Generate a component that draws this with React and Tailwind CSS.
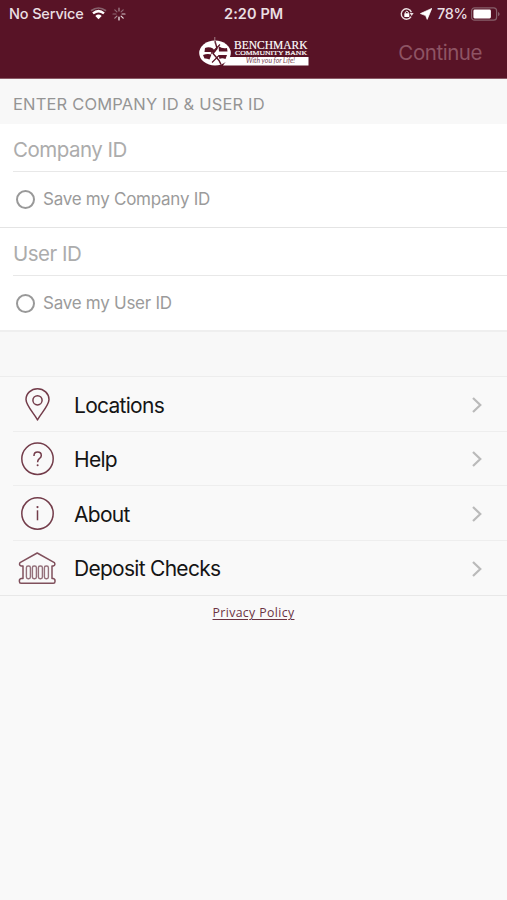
import React from "react";

function StatusBar() {
  return (
    <div className="flex h-[27px] items-center pl-[9px] pr-[5px] text-[14.5px] font-medium text-[#eadfe2]">
      <div className="flex w-[215px] shrink-0 items-center">
        <span className="w-[81px] whitespace-nowrap tracking-[-0.15px]">No Service</span>
        <svg width="17" height="13" viewBox="0 0 17 13" fill="none" className="shrink-0">
          <path d="M1 3.8Q8.5-1.8 16 3.8" stroke="#86606b" strokeWidth="1.7" />
          <path d="M3 6.4Q8.5 1.9 14 6.4" stroke="#fff" strokeWidth="2.5" />
          <path d="M5.3 8.9Q8.5 6.3 11.7 8.9L8.5 12.2Z" fill="#fff" />
        </svg>
        <svg width="14" height="14" viewBox="-7 -7 14 14" strokeWidth="1.2" strokeLinecap="round" className="ml-[5px]">
          <path d="M0-3V-6" stroke="#a88b93" />
          <path d="M2.1-2.1L4.2-4.2" stroke="#8f6a75" />
          <path d="M3 0H6" stroke="#d5c5ca" />
          <path d="M2.1 2.1L4.2 4.2" stroke="#e5d9dc" />
          <path d="M0 3V6" stroke="#fff" />
          <path d="M-2.1 2.1L-4.2 4.2" stroke="#a88b93" />
          <path d="M-3 0H-6" stroke="#8f6a75" />
          <path d="M-2.1-2.1L-4.2-4.2" stroke="#8f6a75" />
        </svg>
      </div>
      <span className="w-[176px] shrink-0 whitespace-nowrap text-[14.5px] font-semibold tracking-[0.1px]">2:20 PM</span>
      <svg width="14" height="14" viewBox="0 0 14 14" fill="none" className="shrink-0">
        <path d="M11 9.6A5.2 5.2 0 1 1 11.4 5.3" stroke="#eadfe2" strokeWidth="1.4" />
        <path d="M9.6 6H13.6L11.7 9Z" fill="#eadfe2" />
        <rect x="4.3" y="6.3" width="5" height="3.7" rx=".5" fill="#fff" />
        <path d="M5.3 6.5V5.3Q6.8 3 8.3 5.3V6.5" stroke="#fff" />
      </svg>
      <svg width="12" height="12" viewBox="0 0 12 12" className="ml-[6px] shrink-0">
        <path d="M11.8 .4L7.2 11.4L5.6 7.6L.4 5.6Z" fill="#fff" stroke="#fff" strokeWidth=".7" strokeLinejoin="round" />
      </svg>
      <span className="ml-[5px] w-[34px] shrink-0 whitespace-nowrap tracking-[-0.4px]">78%</span>
      <svg width="31" height="14" viewBox="0 0 31 14" fill="none" className="shrink-0">
        <rect x=".6" y=".8" width="25" height="12.4" rx="3" stroke="#86606b" strokeWidth="1.2" />
        <rect x="2.4" y="2.6" width="17.5" height="8.8" rx="1.3" fill="#fff" />
        <path d="M27 4.7Q30.4 7 27 9.3Z" fill="#86606b" />
      </svg>
    </div>
  );
}

function Logo() {
  return (
    <svg width="112" height="32" viewBox="0 0 112 32" className="shrink-0">
      <ellipse cx="16" cy="16" rx="15.8" ry="12.5" fill="#fff" />
      <path d="M30 20H109.5V28.5H24Z" fill="#fff" />
      <path d="M6 11Q10 9.5 14 11.5L16.5 15H5.5Z M19.5 9Q23 12 28 11L28.5 14.5H20Z M4 18Q8 16.5 12.5 17.5L10.5 22.5Q7 21 5.5 21.5Z M19.5 18H28L26.5 22Q23 20.5 20.5 22Z" fill="#581326" />
      <path d="M16 4L18 11.5L14 16.5L20 23.5L22 27.5" fill="none" stroke="#581326" strokeWidth="1.4" />
      <path d="M21 7.5L12 16.5M20 18.5L13 25.5" stroke="#581326" strokeWidth="1.1" />
      <path d="M15.8 0V6.5" stroke="#a98a93" strokeWidth=".9" />
      <text x="35" y="12.3" textLength="73.5" lengthAdjust="spacingAndGlyphs" fill="#fff" fontFamily="Liberation Serif, serif" fontSize="11.6" stroke="#fff" strokeWidth=".15">BENCHMARK</text>
      <text x="36" y="18.3" textLength="72" lengthAdjust="spacingAndGlyphs" fill="#fff" fontFamily="Liberation Serif, serif" fontSize="5.4" stroke="#fff" strokeWidth=".15">COMMUNITY BANK</text>
      <text x="47" y="26.2" textLength="49" lengthAdjust="spacingAndGlyphs" fill="#7b4654" fontFamily="Lato, sans-serif" fontSize="6.6" fontStyle="italic">With you for Life!</text>
    </svg>
  );
}

function Field({ label, save, last }) {
  return (
    <div className={last ? "border-b-2 border-[#efefef] bg-white" : "border-b border-[#e4e4e4] bg-white"}>
      <div className="ml-[13px] flex h-[48px] items-center border-b border-[#e8e8e8] pt-[5px] text-[20.5px] tracking-[-0.5px] text-[#acacac]">{label}</div>
      <div className={last ? "flex h-[54px] items-center pl-[16px] pt-px text-[17px] text-[#9b9b9b]" : "flex h-[55px] items-center pl-[16px] text-[17px] text-[#9b9b9b]"}>
        <span className="mr-[8px] h-[19px] w-[19px] rounded-full border-2 border-[#999]" />
        <span className="tracking-[-0.26px]">{save}</span>
      </div>
    </div>
  );
}

function Pin() {
  return (
    <svg width="40" height="40" viewBox="0 0 40 40" fill="none" stroke="#733c4a" strokeWidth="1.5">
      <path d="M20.5 35C17.5 29 9 20.5 9 14.5A11.5 10.8 0 0 1 32 14.5C32 20.5 23.5 29 20.5 35Z" strokeLinejoin="round" />
      <circle cx="20.5" cy="15.3" r="4.6" />
    </svg>
  );
}

function Question() {
  return (
    <svg width="40" height="40" viewBox="0 0 40 40" fill="none" stroke="#733c4a" strokeWidth="1.5">
      <circle cx="20.5" cy="19.8" r="15.7" />
      <path d="M17 16.9V16.5C17 14.4 18.4 13 20.6 13C22.8 13 24.3 14.4 24.3 16.4C24.3 18.2 23.2 18.9 22.1 19.9C21 20.9 20.6 21.6 20.6 23.3" />
      <circle cx="20.6" cy="26.3" r="1" fill="#733c4a" stroke="none" />
    </svg>
  );
}

function Info() {
  return (
    <svg width="40" height="40" viewBox="0 0 40 40" fill="none" stroke="#733c4a" strokeWidth="1.5">
      <circle cx="20.5" cy="19.5" r="15.7" />
      <path d="M20.5 16.3V26.3" />
      <circle cx="20.5" cy="13.1" r="1.1" fill="#733c4a" stroke="none" />
    </svg>
  );
}

function Bank() {
  return (
    <svg width="40" height="40" viewBox="0 0 40 40" fill="none" stroke="#80505c" strokeWidth="1.5" strokeLinejoin="round">
      <path d="M20.2 4L37.4 13.6Q38.8 16 36.2 17H35V29.5H36.2Q38.2 30 38 32V32.5Q38 34.3 36.4 34.3H4Q2.4 34.3 2.4 32.5V32Q2.2 30 4.2 29.5H6V17H4.2Q1.6 16 3 13.6Z" />
      <g stroke="#94707a" strokeWidth="1.4">
        <rect x="9.4" y="17" width="4" height="12.8" rx="1.7" />
        <rect x="15.4" y="17" width="4" height="12.8" rx="1.7" />
        <rect x="21.4" y="17" width="4" height="12.8" rx="1.7" />
        <rect x="27.4" y="17" width="4" height="12.8" rx="1.7" />
      </g>
    </svg>
  );
}

const items = [
  ["Locations", Pin],
  ["Help", Question],
  ["About", Info],
  ["Deposit Checks", Bank],
];

export default function App() {
  return (
    <div className="h-[900px] w-full overflow-hidden bg-[#f9f9f9] font-['Inter',sans-serif]">
      <header className="h-[79px] border-b border-[#8a5a66] bg-[#581326]">
        <StatusBar />
        <div className="flex h-[51px] items-center justify-between pl-[199px] pr-[25px]">
          <Logo />
          <span className="pt-px text-[20.5px] tracking-[-0.45px] text-[#8e5464]">Continue</span>
        </div>
      </header>
      <div className="flex h-[45px] items-center bg-[#f8f8f8] pl-[13px] pt-[5px] text-[16.5px] tracking-[0.17px] text-[#959595]">ENTER COMPANY ID &amp; USER ID</div>
      <Field label="Company ID" save="Save my Company ID" />
      <Field label="User ID" save="Save my User ID" last />
      <div className="h-[45px] border-b border-[#ededed] bg-[#f8f8f8]" />
      <nav className="border-b border-[#e8e8e8]">
        {items.map(([label, Icon], i) => (
          <div key={label} className={i < 3 ? "ml-[13px] flex h-[54.6px] items-center border-b border-[#eeeeee] pl-[4px] pt-[2px]" : "ml-[13px] flex h-[54.6px] items-center pl-[4px] pt-px"}>
            <Icon />
            <div className="ml-[17px] flex-1 pt-px text-[21px] tracking-[-0.72px] text-[#151515]">{label}</div>
            <svg width="12" height="16" viewBox="0 0 12 16" fill="none" stroke="#bababa" strokeWidth="2.2" className="mr-[24px]">
              <path d="M2 1L9.3 8L2 15" />
            </svg>
          </div>
        ))}
      </nav>
      <div className="pt-[8px] text-center font-['Open_Sans',sans-serif] text-[12.3px] font-medium leading-[18px] tracking-[0.37px] text-[#6b3342] underline underline-offset-2">Privacy Policy</div>
    </div>
  );
}
